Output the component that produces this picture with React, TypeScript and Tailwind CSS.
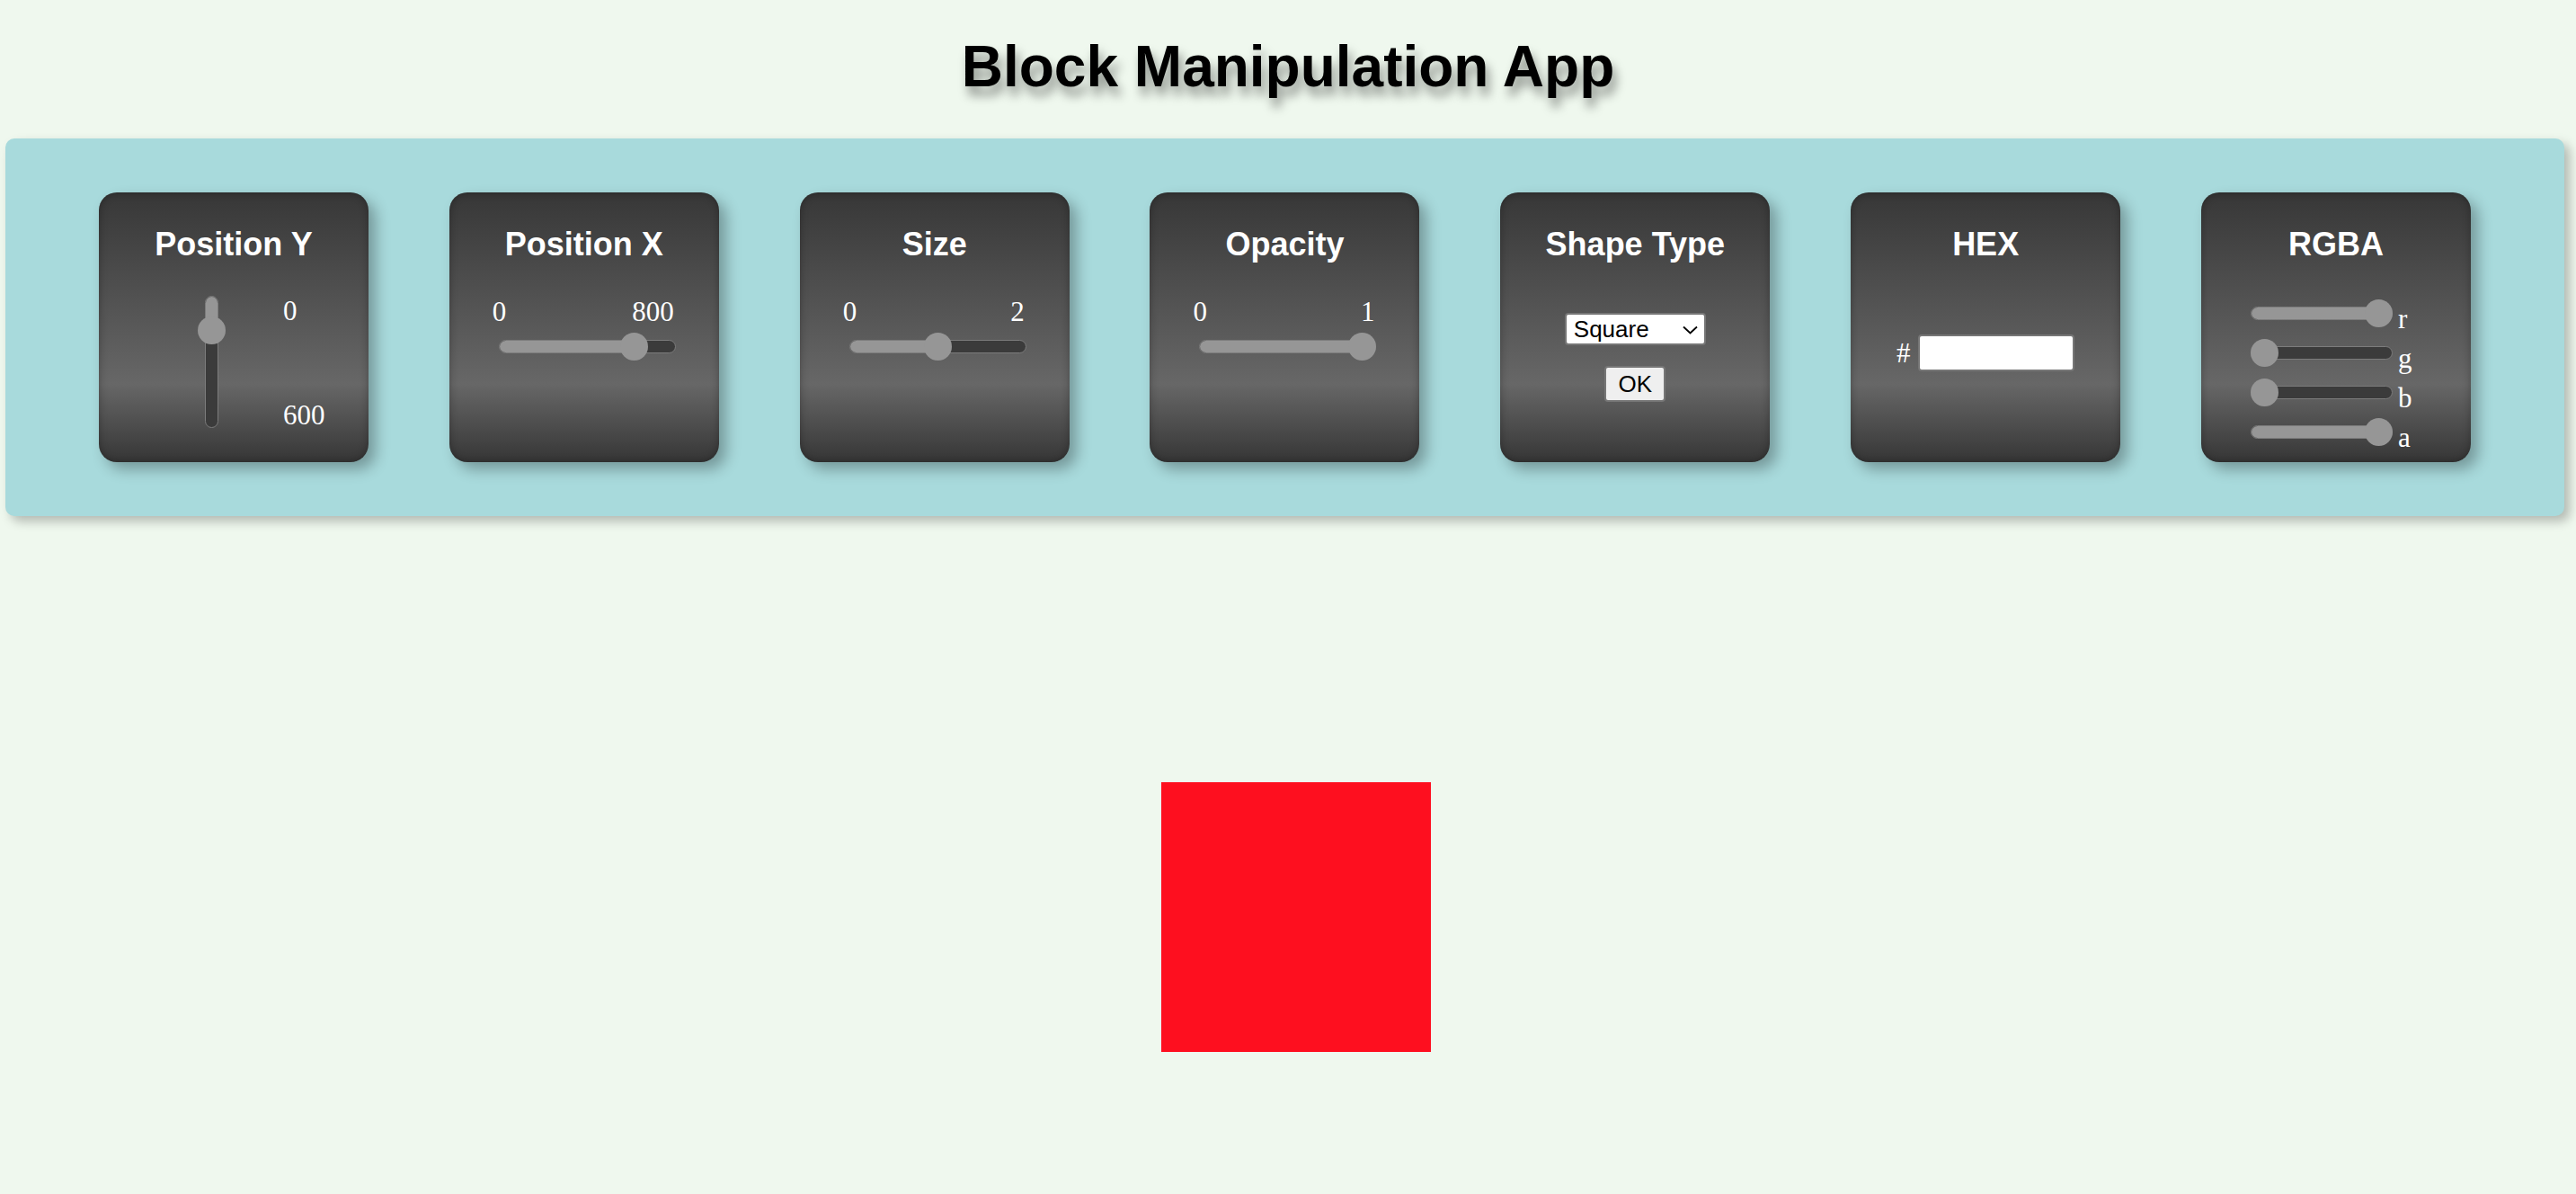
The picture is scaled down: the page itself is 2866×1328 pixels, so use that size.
import React from "react";

const THUMB = 31;
const serif = "font-['Liberation_Serif','Times_New_Roman',serif] text-white text-[31px] leading-[36px]";

function HSlider({ w, value, className = "" }: { w: number; value: number; className?: string }) {
  const left = value * (w - THUMB);
  return (
    <div className={`relative h-[31px] shrink-0 ${className}`}>
      <div className="absolute left-0 right-0 top-[8px] h-[15px] rounded-full bg-[#3b3b3b] border border-[#7c7c7c] overflow-hidden">
        <div className="h-full bg-[#969696]" style={{ width: left + THUMB / 2 }} />
      </div>
      <div className="absolute top-0 w-[31px] h-[31px] rounded-full bg-[#969696]" style={{ left }} />
    </div>
  );
}

function VSlider({ h, value, className = "" }: { h: number; value: number; className?: string }) {
  const top = value * (h - THUMB);
  return (
    <div className={`relative w-[31px] h-[147px] shrink-0 ${className}`}>
      <div className="absolute top-0 bottom-0 left-[8px] w-[15px] rounded-full bg-[#3b3b3b] border border-[#7c7c7c] overflow-hidden">
        <div className="w-full bg-[#969696]" style={{ height: top + THUMB / 2 }} />
      </div>
      <div className="absolute left-0 w-[31px] h-[31px] rounded-full bg-[#969696]" style={{ top }} />
    </div>
  );
}

function Card({ title, children }: { title: string; children?: React.ReactNode }) {
  return (
    <div className="w-[300px] h-[300px] shrink-0 rounded-[20px] pt-[36.5px] bg-[linear-gradient(180deg,#373737_0%,#676767_71%,#363636_100%)] shadow-[8px_8px_16px_rgba(0,0,0,0.3),inset_0_0_10px_rgba(0,0,0,0.3)]">
      <h3 className="text-center text-white font-bold text-[36px] leading-[41px]">{title}</h3>
      {children}
    </div>
  );
}

function RangeCard({ title, min, max, value }: { title: string; min: string; max: string; value: number }) {
  return (
    <Card title={title}>
      <div className={`mt-[37px] ml-[48px] w-[202px] flex justify-between ${serif}`}>
        <span>{min}</span>
        <span>{max}</span>
      </div>
      <HSlider className="mt-[5.5px] ml-[55px] w-[197px]" w={197} value={value} />
    </Card>
  );
}

export default function App() {
  const rgba = [
    { k: "r", v: 1 },
    { k: "g", v: 0 },
    { k: "b", v: 0 },
    { k: "a", v: 1 },
  ];
  return (
    <div className="min-h-screen bg-[#eff8ee] font-['Liberation_Sans',Arial,sans-serif]">
      <h1 className="pt-[37px] mb-[43px] text-center text-[64px] leading-[74px] font-bold text-black [text-shadow:4px_10px_12px_rgba(0,0,0,0.4)]">
        Block Manipulation App
      </h1>

      <div className="ml-[6px] mr-[13px] rounded-[10px] bg-[#a8dadc] py-[60px] pl-[104px] pr-[104px] flex justify-between shadow-[6px_6px_12px_rgba(0,0,0,0.25)]">
        <Card title="Position Y">
          <div className="mt-[37.5px] flex">
            <VSlider className="ml-[110px]" h={147} value={120 / 600} />
            <div className={`ml-[64px] -mt-[1px] h-[152px] flex flex-col justify-between ${serif}`}>
              <span>0</span>
              <span>600</span>
            </div>
          </div>
        </Card>

        <RangeCard title="Position X" min="0" max="800" value={650 / 800} />
        <RangeCard title="Size" min="0" max="2" value={0.5} />
        <RangeCard title="Opacity" min="0" max="1" value={1} />

        <Card title="Shape Type">
          <div className="mt-[56.5px] mx-auto relative w-[157px] h-[36px] bg-white border-2 border-[#767676] rounded-[4px] flex items-center pl-[8px] text-[26px] text-black">
            Square
            <svg className="absolute right-[7px] top-[12px]" width="17" height="10" viewBox="0 0 17 10">
              <path d="M1 1.5 L8.5 8.5 L16 1.5" stroke="#000" strokeWidth="1.8" fill="none" />
            </svg>
          </div>
          <div className="flex justify-center">
            <button className="mt-[23px] w-[68px] h-[40px] bg-[#efefef] border-2 border-[#767676] rounded-[4px] flex items-center justify-center text-[26px] text-black">
              OK
            </button>
          </div>
        </Card>

        <Card title="HEX">
          <div className="mt-[80.5px] flex items-center justify-center gap-[9px]">
            <span className={serif}>#</span>
            <div className="w-[174px] h-[41px] bg-white border-2 border-[#767676] rounded-[4px]" />
          </div>
        </Card>

        <Card title="RGBA">
          <div className="mt-[41px] ml-[55px] flex flex-col gap-[13px]">
            {rgba.map((c) => (
              <div key={c.k} className="flex h-[31px]">
                <HSlider className="w-[158px]" w={158} value={c.v} />
                <span className={`ml-[6px] mt-[4.5px] ${serif} leading-[31px]`}>{c.k}</span>
              </div>
            ))}
          </div>
        </Card>
      </div>

      <div className="relative h-[754px]">
        <div className="absolute left-[1292px] top-[296px] w-[300px] h-[300px] bg-[#fe0f1f]" />
      </div>
    </div>
  );
}
